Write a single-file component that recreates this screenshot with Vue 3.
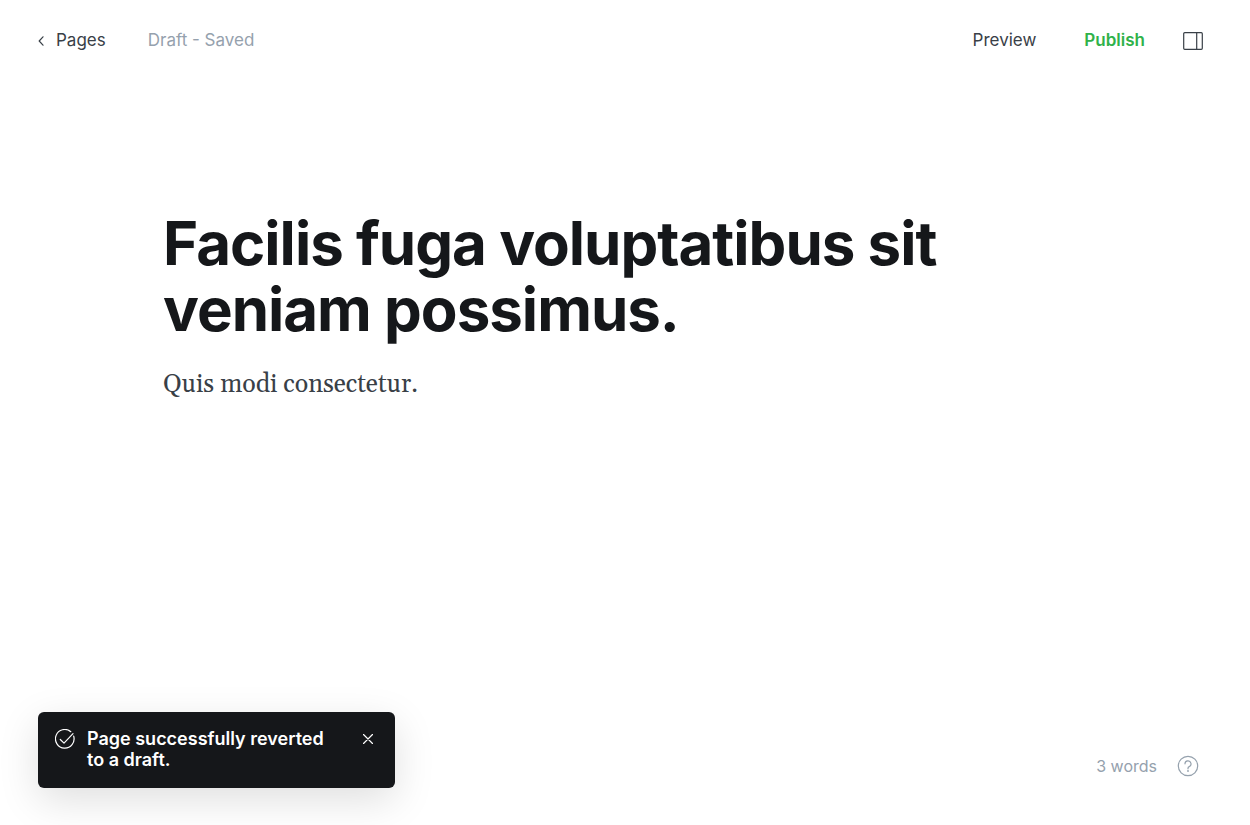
<script setup>
import { ref } from 'vue'

const title = ref('Facilis fuga voluptatibus sit veniam possimus.')
const notice = ref(true)
</script>

<template>
  <div class="editor">
    <header class="bar">
      <nav class="left">
        <a class="back" href="#pages">
          <svg width="6" height="10" viewBox="0 0 6 10"><path d="M5 .8 1.200 5 5 9.200" /></svg>
          <span>Pages</span>
        </a>
        <span class="status">Draft - Saved</span>
      </nav>
      <div class="actions">
        <button class="btn" type="button">Preview</button>
        <button class="btn publish" type="button">Publish</button>
        <button class="btn panel" type="button" aria-label="Settings">
          <svg width="20" height="18" viewBox="0 0 20 18"><rect x=".7" y=".7" width="18.600" height="16.600" rx="1" /><path d="M13.700 1v16" /></svg>
        </button>
      </div>
    </header>

    <main class="content">
      <h1>{{ title }}</h1>
      <p>Quis modi consectetur.</p>
    </main>

    <aside v-if="notice" class="toast" role="status">
      <svg class="check" width="20" height="20" viewBox="0 0 20 20"><path d="M18.700 7.200A9.300 9.300 0 1 1 15.800 2.700" /><path d="m5.300 10.500 3.700 3.600 9-9.400" /></svg>
      <p>Page successfully reverted to a draft.</p>
      <button class="close" type="button" aria-label="Close" @click="notice = false">
        <svg width="10" height="10" viewBox="0 0 10 10"><path d="m.5.5 9 9M9.500.5l-9 9" /></svg>
      </button>
    </aside>

    <footer class="count">
      <span>3 words</span>
      <a href="#help" aria-label="Help">
        <svg width="22" height="22" viewBox="0 0 22 22"><circle cx="11" cy="11" r="9.700" /><path d="M8 8.800a3 3 0 1 1 4.200 2.800c-.8.300-1.200.8-1.200 1.600v.6" /><circle class="dot" cx="11" cy="16" r=".9" /></svg>
      </a>
    </footer>
  </div>
</template>

<style>
body { background: #fff; }
</style>

<style scoped>
.editor {
  position: relative;
  display: flex;
  flex-direction: column;
  min-height: 100vh;
  box-sizing: border-box;
  font-family: Inter, "Liberation Sans", sans-serif;
  color: #394047;
}
svg { display: block; fill: none; stroke: currentColor; stroke-width: 1.2; stroke-linecap: round; stroke-linejoin: round; }
.bar { display: flex; align-items: center; justify-content: space-between; padding: 30px 47px 30px 38px; font-size: 17px; line-height: 21px; }
.left, .actions { display: flex; align-items: center; }
.back { display: flex; align-items: center; gap: 12px; color: inherit; text-decoration: none; }
.status { margin-left: 42px; color: #95a1ad; }
.btn { border: 0; padding: 0; background: none; color: inherit; font: inherit; cursor: pointer; }
.publish { margin-left: 48px; color: #30b24a; font-weight: 600; }
.panel { margin-left: 38px; }
.content { padding: 129px 163px 0; max-width: 924px; }
h1 { margin: 0; color: #15171a; font-size: 60px; line-height: 66px; font-weight: 700; letter-spacing: -1px; }
.content p { margin: 24px 0 0; font-family: Georgia, Gelasio, "Liberation Serif", serif; font-size: 25px; line-height: 38px; }
.toast {
  position: absolute; left: 38px; bottom: 37px; width: 357px; box-sizing: border-box;
  display: flex; align-items: flex-start; padding: 16px 17px 18px; border-radius: 6px; background: #15171a; color: #fff;
  box-shadow: 0 12px 40px rgba(0, 0, 0, .13);
}
.toast p { flex: 1; margin: 0 28px 0 12px; font-size: 18px; line-height: 21px; font-weight: 600; }
.check { margin-top: 1px; }
.close { border: 0; margin-top: 1px; padding: 5px; background: none; color: inherit; cursor: pointer; }
.count { position: absolute; right: 51px; bottom: 48px; display: flex; align-items: center; gap: 20px; color: #95a1ad; font-size: 16px; }
.count a { color: inherit; }
.dot { fill: currentColor; stroke: none; }
</style>
